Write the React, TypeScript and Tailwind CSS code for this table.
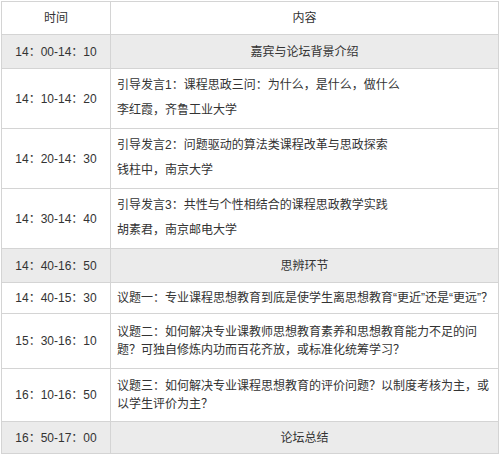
type Row = {
  time: string;
  lines: string[];
  grey?: boolean;
  h: string;
  kind?: 'center' | 'top' | 'middle';
};

const rows: Row[] = [
  { time: '14：00-14：10', lines: ['嘉宾与论坛背景介绍'], grey: true, h: 'h-[34px]', kind: 'center' },
  { time: '14：10-14：20', lines: ['引导发言1：课程思政三问：为什么，是什么，做什么', '李红霞，齐鲁工业大学'], h: 'h-[60px]', kind: 'top' },
  { time: '14：20-14：30', lines: ['引导发言2：问题驱动的算法类课程改革与思政探索', '钱柱中，南京大学'], h: 'h-[60px]', kind: 'top' },
  { time: '14：30-14：40', lines: ['引导发言3：共性与个性相结合的课程思政教学实践', '胡素君，南京邮电大学'], h: 'h-[60px]', kind: 'top' },
  { time: '14：40-16：50', lines: ['思辨环节'], grey: true, h: 'h-[34px]', kind: 'center' },
  { time: '14：40-15：30', lines: ['议题一：专业课程思想教育到底是使学生离思想教育“更近”还是“更远”？'], h: 'h-[31px]', kind: 'middle' },
  { time: '15：30-16：10', lines: ['议题二：如何解决专业课教师思想教育素养和思想教育能力不足的问', '题？可独自修炼内功而百花齐放，或标准化统筹学习？'], h: 'h-[55px]', kind: 'middle' },
  { time: '16：10-16：50', lines: ['议题三：如何解决专业课程思想教育的评价问题？以制度考核为主，或', '以学生评价为主？'], h: 'h-[53px]', kind: 'middle' },
  { time: '16：50-17：00', lines: ['论坛总结'], grey: true, h: 'h-[32px]', kind: 'center' },
];

function Content({ row }: { row: Row }) {
  if (row.kind === 'center') {
    return <div className="flex-1 flex items-center justify-center">{row.lines[0]}</div>;
  }
  if (row.kind === 'top') {
    return (
      <div className="flex-1 pl-[6px] pt-[4px] leading-[25px]">
        {row.lines.map((l) => (
          <div key={l} className="whitespace-nowrap">{l}</div>
        ))}
      </div>
    );
  }
  return (
    <div className="flex-1 pl-[6px] flex flex-col justify-center leading-[18px]">
      {row.lines.map((l) => (
        <div key={l} className="whitespace-nowrap">{l}</div>
      ))}
    </div>
  );
}

export default function App() {
  return (
    <div
      className="w-[500px] h-[455px] bg-white pt-[1px] pl-[1px] text-[12px] text-[#333]"
      style={{ fontFamily: '"Liberation Sans", "Noto Sans CJK SC", sans-serif' }}
    >
      <div className="w-[498px] border border-[#d4d4d4] flex flex-col">
        <div className="flex h-[32px]">
          <div className="w-[109px] border-r border-[#d4d4d4] flex items-center justify-center">时间</div>
          <div className="flex-1 flex items-center justify-center">内容</div>
        </div>
        {rows.map((row) => (
          <div
            key={row.time + row.lines[0]}
            className={`flex border-t border-[#d4d4d4] ${row.h} ${row.grey ? 'bg-[#ebebeb]' : ''}`}
          >
            <div className="w-[109px] border-r border-[#d4d4d4] flex items-center justify-center">{row.time}</div>
            <Content row={row} />
          </div>
        ))}
      </div>
    </div>
  );
}
